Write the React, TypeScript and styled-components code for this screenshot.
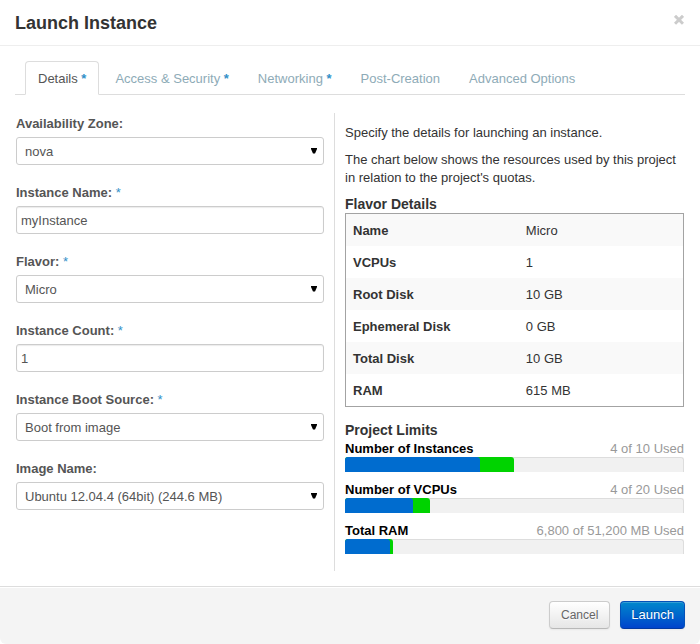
import React from "react";
import styled, { createGlobalStyle } from "styled-components";

const GlobalStyle = createGlobalStyle`
  *, *::before, *::after { box-sizing: border-box; }
  body {
    margin: 0;
    background: #fff;
    color: #333;
    font: 13px/18px "Liberation Sans", Arial, sans-serif;
  }
  button, input, select { font: inherit; }
`;

const Dialog = styled.form`
  display: flex;
  flex-direction: column;
  min-height: 100vh;
  background: #fff;
  border-radius: 6px;
  overflow: hidden;
`;

const Header = styled.header`
  display: flex;
  justify-content: space-between;
  align-items: flex-start;
  padding: 8px 15px 7px;
  border-bottom: 1px solid #eee;
`;

const Title = styled.h1`
  margin: 0;
  font-size: 18px;
  line-height: 30px;
`;

const CloseButton = styled.button`
  display: flex;
  padding: 7px 1px;
  border: 0;
  background: none;
  color: #ccc;
`;

const Body = styled.main`
  flex: 1;
  padding: 15px;
`;

const Tabs = styled.nav`
  display: flex;
  gap: 3px;
  padding-left: 10px;
  border-bottom: 1px solid #ddd;
`;

const Tab = styled.a<{ $active?: boolean }>`
  margin-bottom: -1px;
  padding: 9px 12px 7px;
  border: 1px solid ${(p) => (p.$active ? "#ddd" : "transparent")};
  border-bottom-color: ${(p) => (p.$active ? "#fff" : "#ddd")};
  border-radius: 4px 4px 0 0;
  color: ${(p) => (p.$active ? "#555" : "#8eabb7")};
  line-height: 16px;
  text-decoration: none;
  white-space: nowrap;
`;

const Star = styled.span<{ $bold?: boolean }>`
  color: #3290c8;
  font-weight: ${(p) => (p.$bold ? "bold" : "normal")};
`;

const Columns = styled.div`
  display: grid;
  grid-template-columns: 320fr 350fr;
  margin-top: 18px;
`;

const Fields = styled.section`
  display: flex;
  flex-direction: column;
  gap: 19px;
  padding: 2px 10px 0 1px;
  border-right: 1px solid #ddd;
`;

const Field = styled.div`
  display: flex;
  flex-direction: column;
  gap: 4px;
`;

const Label = styled.label`
  color: #555;
  font-weight: bold;
`;

const TextInput = styled.input`
  width: 100%;
  height: 28px;
  padding: 4px;
  border: 1px solid #ccc;
  border-radius: 3px;
  background: #fff;
  box-shadow: inset 0 1px 1px rgba(0, 0, 0, 0.08);
  color: #555;
`;

const SelectShell = styled.div`
  display: grid;
  align-items: center;
  > * { grid-area: 1 / 1; }
  > svg {
    justify-self: end;
    margin-right: 6px;
    pointer-events: none;
  }
`;

const SelectBox = styled.select`
  appearance: none;
  width: 100%;
  height: 28px;
  padding: 2px 20px 0 8px;
  border: 1px solid #ccc;
  border-radius: 3px;
  background: #fff;
  color: #555;
`;

const Info = styled.section`
  padding: 11px 1px 9px 10px;
`;

const Intro = styled.div`
  display: grid;
  gap: 9px;
  padding-bottom: 8px;
`;

const Paragraph = styled.p`
  margin: 0;
`;

const SubTitle = styled.h2`
  margin: 0;
  font-size: 14px;
  line-height: 18px;
`;

const FlavorTable = styled.table`
  width: 100%;
  margin-bottom: 14px;
  border: 1px solid #a3a3a3;
  border-spacing: 0;
  tr:nth-child(odd) { background: #f9f9f9; }
  th, td {
    padding: 8px 7px 6px;
    text-align: left;
  }
  td { padding-left: 8px; }
  th { width: 51%; }
`;

const Quota = styled.div`
  margin-bottom: 8px;
`;

const QuotaHead = styled.div`
  display: flex;
  justify-content: space-between;
  padding-top: 1px;
  line-height: 17px;
  color: #999;
  strong { color: #000; }
`;

const Track = styled.div`
  display: grid;
  height: 15px;
  border: 1px solid #ddd;
  border-width: 1px 1px 0 0;
  border-radius: 3px 3px 0 0;
  background: #f1f1f1;
`;

const Bar = styled.div<{ $color: string }>`
  grid-area: 1 / 1;
  margin-top: -1px;
  border-radius: 3px 3px 0 0;
  background: ${(p) => p.$color};
`;

const Footer = styled.footer`
  display: flex;
  justify-content: flex-end;
  gap: 10px;
  padding: 14px 15px 15px;
  border-top: 1px solid #ddd;
  background: #f4f4f4;
  box-shadow: inset 0 1px 0 #fff;
`;

const Button = styled.button<{ $primary?: boolean }>`
  height: 28px;
  padding: ${(p) => (p.$primary ? "0 10px" : "0 11px")};
  border: 1px solid;
  border-color: ${(p) => (p.$primary ? "#0451b8 #0451b8 #0339a0" : "#ccc #ccc #b8b8b8")};
  border-radius: 4px;
  background: ${(p) =>
    p.$primary ? "linear-gradient(#0088cc, #0044cc)" : "linear-gradient(#fff, #e6e6e6)"};
  box-shadow: inset 0 1px 0 rgba(255, 255, 255, 0.2), 0 1px 2px rgba(0, 0, 0, 0.05);
  color: ${(p) => (p.$primary ? "#fff" : "#666")};
  font-size: ${(p) => (p.$primary ? "13px" : "12px")};
  text-shadow: ${(p) => (p.$primary ? "0 -1px 0 rgba(0,0,0,.25)" : "0 1px 1px rgba(255,255,255,.75)")};
`;

const tabs = [
  { name: "Details", required: true, active: true },
  { name: "Access & Security", required: true },
  { name: "Networking", required: true },
  { name: "Post-Creation" },
  { name: "Advanced Options" },
];

const fields = [
  { id: "zone", label: "Availability Zone:", value: "nova", select: true },
  { id: "name", label: "Instance Name:", value: "myInstance", required: true },
  { id: "flavor", label: "Flavor:", value: "Micro", select: true, required: true },
  { id: "count", label: "Instance Count:", value: "1", required: true },
  { id: "source", label: "Instance Boot Source:", value: "Boot from image", select: true, required: true },
  { id: "image", label: "Image Name:", value: "Ubuntu 12.04.4 (64bit) (244.6 MB)", select: true },
];

const flavor = [
  ["Name", "Micro"],
  ["VCPUs", "1"],
  ["Root Disk", "10 GB"],
  ["Ephemeral Disk", "0 GB"],
  ["Total Disk", "10 GB"],
  ["RAM", "615 MB"],
];

const quotas = [
  { name: "Number of Instances", usage: "4 of 10 Used", used: 40, planned: 50 },
  { name: "Number of VCPUs", usage: "4 of 20 Used", used: 20, planned: 25 },
  { name: "Total RAM", usage: "6,800 of 51,200 MB Used", used: 13.3, planned: 14.3 },
];

export default function App() {
  return (
    <>
      <GlobalStyle />
      <Dialog onSubmit={(e) => e.preventDefault()}>
        <Header>
          <Title>Launch Instance</Title>
          <CloseButton type="button" aria-label="Close">
            <svg width="10" height="10" viewBox="0 0 10 10" aria-hidden="true">
              <path d="M1 .8l8 8M9 .8l-8 8" stroke="currentColor" strokeWidth="3" />
            </svg>
          </CloseButton>
        </Header>
        <Body>
          <Tabs>
            {tabs.map((t) => (
              <Tab key={t.name} href="#" $active={t.active}>
                {t.name}
                {t.required && <Star $bold> *</Star>}
              </Tab>
            ))}
          </Tabs>
          <Columns>
            <Fields>
              {fields.map((f) => (
                <Field key={f.id}>
                  <Label htmlFor={f.id}>
                    {f.label}
                    {f.required && <Star> *</Star>}
                  </Label>
                  {f.select ? (
                    <SelectShell>
                      <SelectBox id={f.id} defaultValue={f.value}>
                        <option>{f.value}</option>
                      </SelectBox>
                      <svg width="8" height="8" viewBox="0 0 8 8" aria-hidden="true">
                        <path d="M1 1h6v1L5 6.5H3L1 2z" fill="#000" />
                      </svg>
                    </SelectShell>
                  ) : (
                    <TextInput id={f.id} type="text" defaultValue={f.value} />
                  )}
                </Field>
              ))}
            </Fields>
            <Info>
              <Intro>
                <Paragraph>Specify the details for launching an instance.</Paragraph>
                <Paragraph>
                  The chart below shows the resources used by this project in relation to the project's quotas.
                </Paragraph>
              </Intro>
              <SubTitle>Flavor Details</SubTitle>
              <FlavorTable>
                <tbody>
                  {flavor.map(([k, v]) => (
                    <tr key={k}>
                      <th scope="row">{k}</th>
                      <td>{v}</td>
                    </tr>
                  ))}
                </tbody>
              </FlavorTable>
              <SubTitle>Project Limits</SubTitle>
              {quotas.map((q) => (
                <Quota key={q.name}>
                  <QuotaHead>
                    <strong>{q.name}</strong>
                    <span>{q.usage}</span>
                  </QuotaHead>
                  <Track>
                    <Bar $color="#00d300" style={{ width: `${q.planned}%` }} />
                    <Bar $color="#006ccf" style={{ width: `${q.used}%` }} />
                  </Track>
                </Quota>
              ))}
            </Info>
          </Columns>
        </Body>
        <Footer>
          <Button type="button">Cancel</Button>
          <Button type="submit" $primary>Launch</Button>
        </Footer>
      </Dialog>
    </>
  );
}
